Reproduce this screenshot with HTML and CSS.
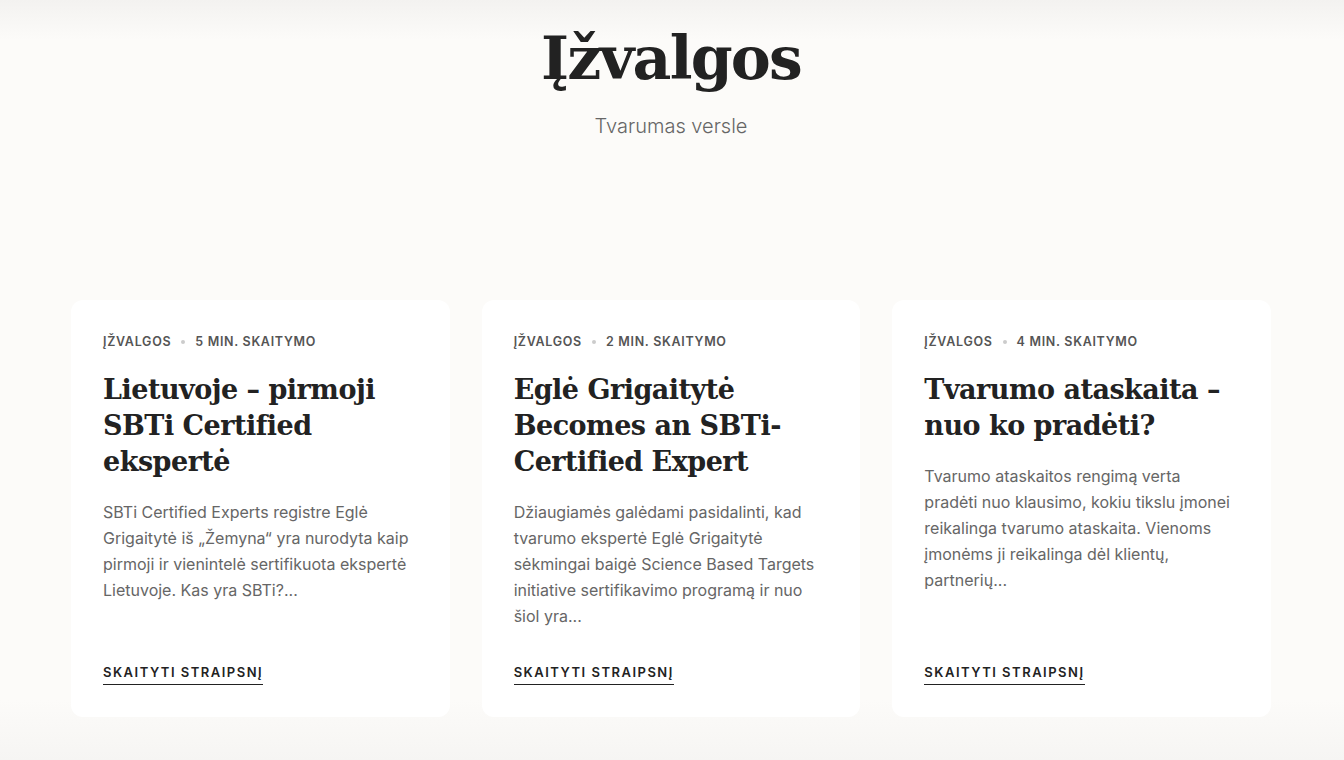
FILE: index.html
```html
<!DOCTYPE html>
<html lang="lt">
<head>
<meta charset="utf-8">
<link rel="stylesheet" href="styles.css">
</head>
<body>
<main class="page">
  <header class="hero">
    <h1 class="hero-title">Įžvalgos</h1>
    <p class="hero-sub">Tvarumas versle</p>
  </header>
  <section class="grid">
    <article class="card">
      <div class="meta"><span>Įžvalgos</span><span class="dot"></span><span>5 min. skaitymo</span></div>
      <h2 class="card-title">Lietuvoje – pirmoji SBTi Certified ekspertė</h2>
      <p class="excerpt">SBTi Certified Experts registre Eglė Grigaitytė iš „Žemyna“ yra nurodyta kaip pirmoji ir vienintelė sertifikuota ekspertė Lietuvoje. Kas yra SBTi?...</p>
      <a class="more" href="#">Skaityti straipsnį</a>
    </article>
    <article class="card">
      <div class="meta"><span>Įžvalgos</span><span class="dot"></span><span>2 min. skaitymo</span></div>
      <h2 class="card-title">Eglė Grigaitytė Becomes an SBTi-Certified Expert</h2>
      <p class="excerpt">Džiaugiamės galėdami pasidalinti, kad tvarumo ekspertė Eglė Grigaitytė sėkmingai baigė Science Based Targets initiative sertifikavimo programą ir nuo šiol yra...</p>
      <a class="more" href="#">Skaityti straipsnį</a>
    </article>
    <article class="card">
      <div class="meta"><span>Įžvalgos</span><span class="dot"></span><span>4 min. skaitymo</span></div>
      <h2 class="card-title">Tvarumo ataskaita – nuo ko pradėti?</h2>
      <p class="excerpt">Tvarumo ataskaitos rengimą verta pradėti nuo klausimo, kokiu tikslu įmonei reikalinga tvarumo ataskaita. Vienoms įmonėms ji reikalinga dėl klientų, partnerių...</p>
      <a class="more" href="#">Skaityti straipsnį</a>
    </article>
  </section>
</main>
</body>
</html>
```

FILE: styles.css
```css
* { box-sizing: border-box; }
html, body { margin: 0; padding: 0; }
body {
  background: linear-gradient(to bottom, #f3f2f0 0px, #fcfbf9 40px, #fcfbf9 700px, #f6f5f3 760px);
  min-height: 760px;
  font-family: Inter, "Noto Sans", sans-serif;
  color: #222;
}
.page { width: 1200px; margin: 0 auto; position: relative; left: -1px; }
.hero { text-align: center; padding-top: 20px; }
.hero-title {
  margin: 0;
  font-family: "DejaVu Serif", Georgia, serif;
  font-weight: 700;
  font-size: 60px;
  line-height: 76px;
  letter-spacing: -1.8px;
  color: #222;
}
.hero-sub {
  margin: 18px 0 0;
  font-size: 20px;
  font-weight: 300;
  color: #666;
  line-height: 24px;
}
.grid {
  margin-top: 162px;
  display: grid;
  grid-template-columns: repeat(3, 1fr);
  gap: 32px;
}
.card {
  background: #fff;
  border-radius: 12px;
  padding: 33px 34px 32px 32px;
  height: 417px;
  display: flex;
  flex-direction: column;
}
.meta {
  display: flex;
  align-items: center;
  gap: 10px;
  font-size: 12.5px;
  font-weight: 600;
  letter-spacing: 0.7px;
  text-transform: uppercase;
  color: #555;
  line-height: 18px;
}
.dot { width: 4px; height: 4px; border-radius: 50%; background: #ccc; }
.card-title {
  margin: 21px 0 0;
  font-family: "DejaVu Serif", Georgia, serif;
  font-weight: 700;
  font-size: 27px;
  line-height: 36px;
  letter-spacing: -0.5px;
  color: #222;
}
.excerpt {
  margin: 19px 0 0;
  font-size: 16px;
  line-height: 26px;
  color: #666;
}
.more {
  margin-top: auto;
  align-self: flex-start;
  font-size: 13px;
  font-weight: 600;
  letter-spacing: 1.5px;
  text-transform: uppercase;
  color: #222;
  text-decoration: none;
  border-bottom: 1.5px solid #222;
  padding-bottom: 4px;
  line-height: 16px;
}
```
